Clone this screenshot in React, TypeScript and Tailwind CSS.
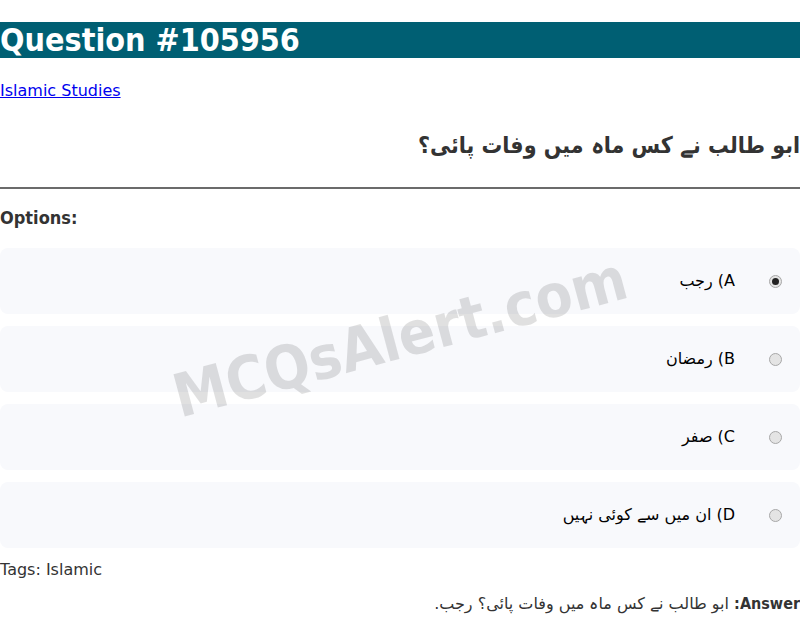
import { useState } from 'react';

const options = [
  { key: 'A', text: 'A) رجب' },
  { key: 'B', text: 'B) رمضان' },
  { key: 'C', text: 'C) صفر' },
  { key: 'D', text: 'D) ان میں سے کوئی نہیں' },
];

// bold text on the page is set in the condensed cut
const heading = "font-['DejaVu_Sans_Condensed','DejaVu_Sans',sans-serif] font-bold";

function Radio({ checked }: { checked: boolean }) {
  return (
    <span className="flex h-[13px] w-[13px] shrink-0 items-center justify-center rounded-full border border-[#a8a8a8] bg-[#e4e4e4]">
      {checked && <span className="h-[7px] w-[7px] rounded-full bg-[#222]" />}
    </span>
  );
}

export default function App() {
  const [selected, setSelected] = useState('A');

  return (
    <div className="relative min-h-[628px] bg-white font-['DejaVu_Sans',sans-serif] text-black">
      <h1 className={`${heading} mt-[22px] h-[36px] bg-[#005f73] text-[32px] leading-[36px] text-white`}>
        Question #105956
      </h1>

      <p className="mt-[24px] text-base leading-[18px]">
        <a href="#" className="text-[#0000ee] underline">
          Islamic Studies
        </a>
      </p>

      <h2 dir="rtl" className={`${heading} mt-[32px] text-right text-[23px] leading-[26px] text-[#333]`}>
        ابو طالب نے کس ماہ میں وفات پائی؟
      </h2>

      <hr className="mt-[29px] border-t-2 border-[#6b6b6b]" />

      <h3 className={`${heading} mt-[18px] text-lg leading-[21px] text-[#333]`}>Options:</h3>

      <div className="mt-[20px] flex flex-col gap-3">
        {options.map((o) => (
          <label
            key={o.key}
            dir="rtl"
            onClick={() => setSelected(o.key)}
            className="flex h-[66px] cursor-pointer items-center gap-[34px] rounded-lg bg-[#f8f9fc] pr-[18px] pl-5"
          >
            <Radio checked={selected === o.key} />
            <span className="text-base leading-[18px]">{o.text}</span>
          </label>
        ))}
      </div>

      <p className="mt-[13px] text-base leading-[18px] text-[#333]">Tags: Islamic</p>

      <p dir="rtl" className="mt-[16px] text-right text-base leading-[18px] text-[#333]">
        <strong className={heading}>Answer:</strong> ابو طالب نے کس ماہ میں وفات پائی؟ رجب.
      </p>

      <div
        className={`${heading} pointer-events-none absolute top-[315px] left-1/2 z-10 -translate-x-1/2 -translate-y-1/2 -rotate-[15deg] text-[60px] leading-none whitespace-nowrap text-black/[0.12] select-none`}
      >
        MCQsAlert.com
      </div>
    </div>
  );
}
